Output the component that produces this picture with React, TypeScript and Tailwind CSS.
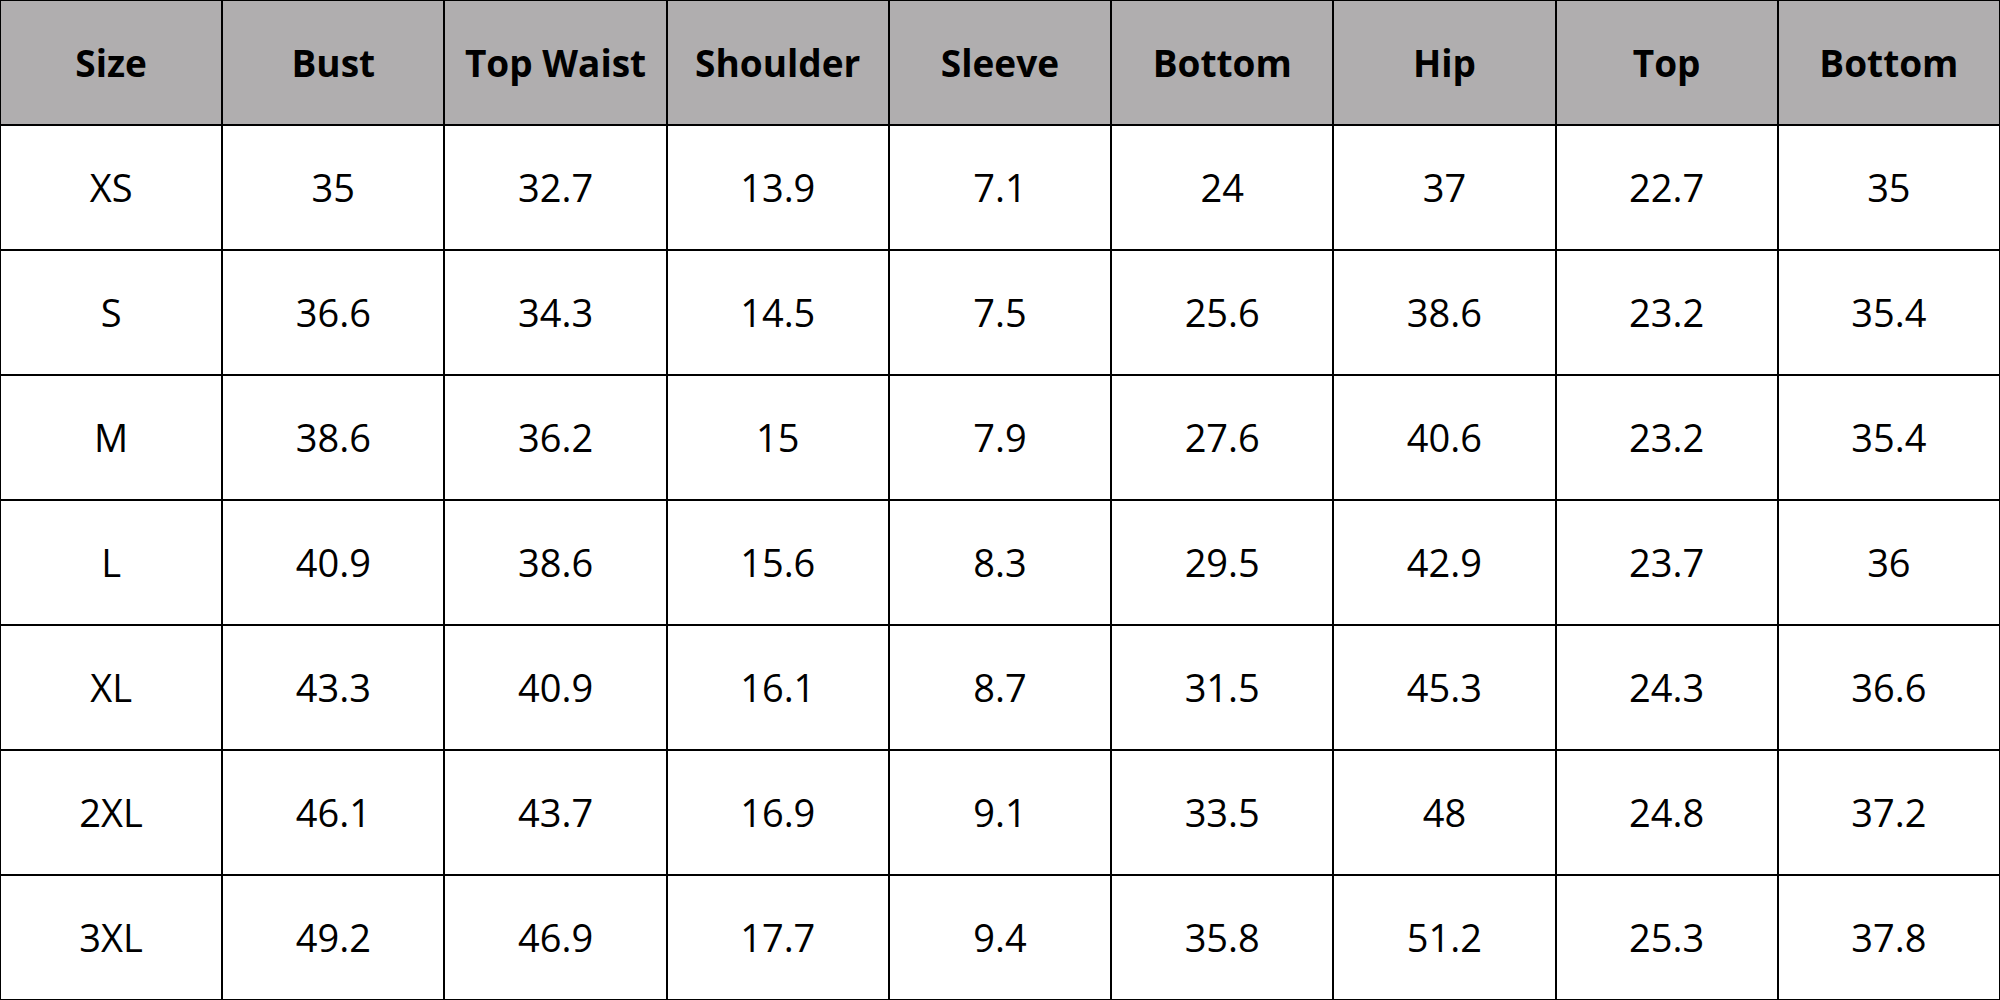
import React from 'react';

const headers = ['Size', 'Bust', 'Top Waist', 'Shoulder', 'Sleeve', 'Bottom', 'Hip', 'Top', 'Bottom'];

const rows = [
    ['XS', '35', '32.7', '13.9', '7.1', '24', '37', '22.7', '35'],
    ['S', '36.6', '34.3', '14.5', '7.5', '25.6', '38.6', '23.2', '35.4'],
    ['M', '38.6', '36.2', '15', '7.9', '27.6', '40.6', '23.2', '35.4'],
    ['L', '40.9', '38.6', '15.6', '8.3', '29.5', '42.9', '23.7', '36'],
    ['XL', '43.3', '40.9', '16.1', '8.7', '31.5', '45.3', '24.3', '36.6'],
    ['2XL', '46.1', '43.7', '16.9', '9.1', '33.5', '48', '24.8', '37.2'],
    ['3XL', '49.2', '46.9', '17.7', '9.4', '35.8', '51.2', '25.3', '37.8'],
];

export default function App() {
    return (
        <div className="w-[2000px] h-[1000px] bg-black p-[1px] grid grid-cols-9 grid-rows-8 gap-[2px] font-['Open_Sans',sans-serif] text-black">
            {headers.map((h, i) => (
                <div key={'h' + i} className="bg-[#b0aeaf] flex items-center justify-center text-[37px] font-bold">
                    {h}
                </div>
            ))}
            {rows.map((row, r) =>
                row.map((cell, c) => (
                    <div key={r + '-' + c} className="bg-white flex items-center justify-center text-[38px]">
                        {cell}
                    </div>
                ))
            )}
        </div>
    );
}
